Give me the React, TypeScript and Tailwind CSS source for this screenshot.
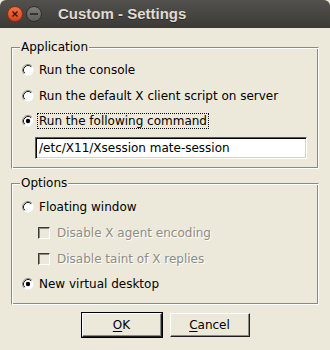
import React from "react";

function Radio({ checked }: { checked?: boolean }) {
  return (
    <svg width="12" height="12" viewBox="0 0 12 12" className="shrink-0">
      <circle cx="6" cy="6" r="5.5" fill="#ffffff" />
      <path d="M2.11 9.89 A5.5 5.5 0 0 1 9.89 2.11" fill="none" stroke="#8a8a85" strokeWidth="1" />
      <path d="M2.82 9.18 A4.5 4.5 0 0 1 9.18 2.82" fill="none" stroke="#1a1a1a" strokeWidth="1" />
      {checked && <circle cx="6" cy="6" r="2.2" fill="#000000" />}
    </svg>
  );
}

function RadioRow({
  label,
  checked,
  focused,
  h,
}: {
  label: string;
  checked?: boolean;
  focused?: boolean;
  h: string;
}) {
  return (
    <div className={"flex items-center " + h}>
      <div className="ml-[2px] flex">
        <Radio checked={checked} />
      </div>
      <span
        className={
          "ml-[3px] px-[1px] border leading-[14px] whitespace-nowrap " +
          (focused ? "border-dotted border-black" : "border-transparent")
        }
      >
        {label}
      </span>
    </div>
  );
}

function CheckRow({ label, h }: { label: string; h: string }) {
  return (
    <div className={"flex items-center " + h}>
      <div className="ml-[18px] w-[12px] h-[12px] shrink-0 border border-t-[#3a3a3a] border-l-[#3a3a3a] border-r-white border-b-white shadow-[inset_1px_1px_0_#8a8a85]" />
      <span className="ml-[5px] px-[1px] border border-transparent leading-[14px] whitespace-nowrap text-[#8e8c86] [text-shadow:1px_1px_0_#ffffff]">
        {label}
      </span>
    </div>
  );
}

export default function App() {
  return (
    <div className="w-[330px] h-[350px] bg-[#ece9db] font-['DejaVu_Sans',sans-serif] text-[12px] text-black overflow-hidden">
      <div className="h-[28px] rounded-t-[6px] bg-linear-to-b from-[#52514d] to-[#3b3a36] flex items-center pl-[7px]">
        <div className="w-[16px] h-[16px] rounded-full bg-linear-to-b from-[#f37044] to-[#d8431a] border border-[#8a2e10] flex items-center justify-center">
          <svg width="8" height="8" viewBox="0 0 8 8">
            <path d="M1.5 1.5L6.5 6.5M6.5 1.5L1.5 6.5" stroke="#3a1408" strokeWidth="1.4" />
          </svg>
        </div>
        <div className="ml-[3px] w-[16px] h-[16px] rounded-full bg-linear-to-b from-[#7d7c78] to-[#5e5d59] border border-[#2f2e2b] flex items-center justify-center">
          <div className="w-[8px] h-[2px] bg-[#35342f]" />
        </div>
        <div className="ml-[16px] text-[15px] font-bold text-[#dfdbd2] font-['Liberation_Sans',sans-serif] [text-shadow:0_1px_0_#2a2925]">
          Custom - Settings
        </div>
      </div>

      <div className="pt-[12px]">
        <fieldset className="mx-[11px] border border-t-[#8a8a85] border-l-[#8a8a85] border-r-white border-b-white shadow-[inset_1px_1px_0_#ffffff,inset_-1px_-1px_0_#8a8a85] pl-[8px] pr-[11px] pb-[9px]">
          <legend className="px-[1px] bg-[#ece9db] leading-[14px]">Application</legend>
          <div className="flex flex-col pt-[3px]">
            <RadioRow label="Run the console" h="h-[26px]" />
            <RadioRow label="Run the default X client script on server" h="h-[25px]" />
            <RadioRow label="Run the following command" checked focused h="h-[26px]" />
            <div className="mt-[3px] ml-[15px] h-[22px] bg-white border border-t-[#5a5a58] border-l-[#5a5a58] border-r-white border-b-white shadow-[inset_1px_1px_0_#000000,inset_-1px_-1px_0_#d6d3c8] flex items-center pl-[3px] leading-[14px] whitespace-nowrap">
              /etc/X11/Xsession mate-session
            </div>
          </div>
        </fieldset>

        <fieldset className="mt-[7px] mx-[11px] border border-t-[#8a8a85] border-l-[#8a8a85] border-r-white border-b-white shadow-[inset_1px_1px_0_#ffffff,inset_-1px_-1px_0_#8a8a85] pl-[8px] pr-[11px] pb-[7px]">
          <legend className="px-[1px] bg-[#ece9db] leading-[14px]">Options</legend>
          <div className="flex flex-col pt-[4px]">
            <RadioRow label="Floating window" h="h-[26px]" />
            <CheckRow label="Disable X agent encoding" h="h-[26px]" />
            <CheckRow label="Disable taint of X replies" h="h-[25px]" />
            <RadioRow label="New virtual desktop" checked h="h-[26px]" />
          </div>
        </fieldset>

        <div className="mt-[7px] flex justify-center items-center gap-[7px]">
          <div className="w-[82px] h-[26px] border border-black flex">
            <div className="flex-1 border border-t-white border-l-white border-r-[#1e1e1e] border-b-[#1e1e1e] shadow-[inset_-1px_-1px_0_#8a8a85] flex items-center justify-center leading-[14px]">
              <span>
                <span className="underline underline-offset-[2px]">O</span>K
              </span>
            </div>
          </div>
          <div className="w-[80px] h-[24px] border border-t-white border-l-white border-r-[#1e1e1e] border-b-[#1e1e1e] shadow-[inset_-1px_-1px_0_#8a8a85] flex items-center justify-center leading-[14px]">
            <span>
              <span className="underline underline-offset-[2px]">C</span>ancel
            </span>
          </div>
        </div>
      </div>
    </div>
  );
}
